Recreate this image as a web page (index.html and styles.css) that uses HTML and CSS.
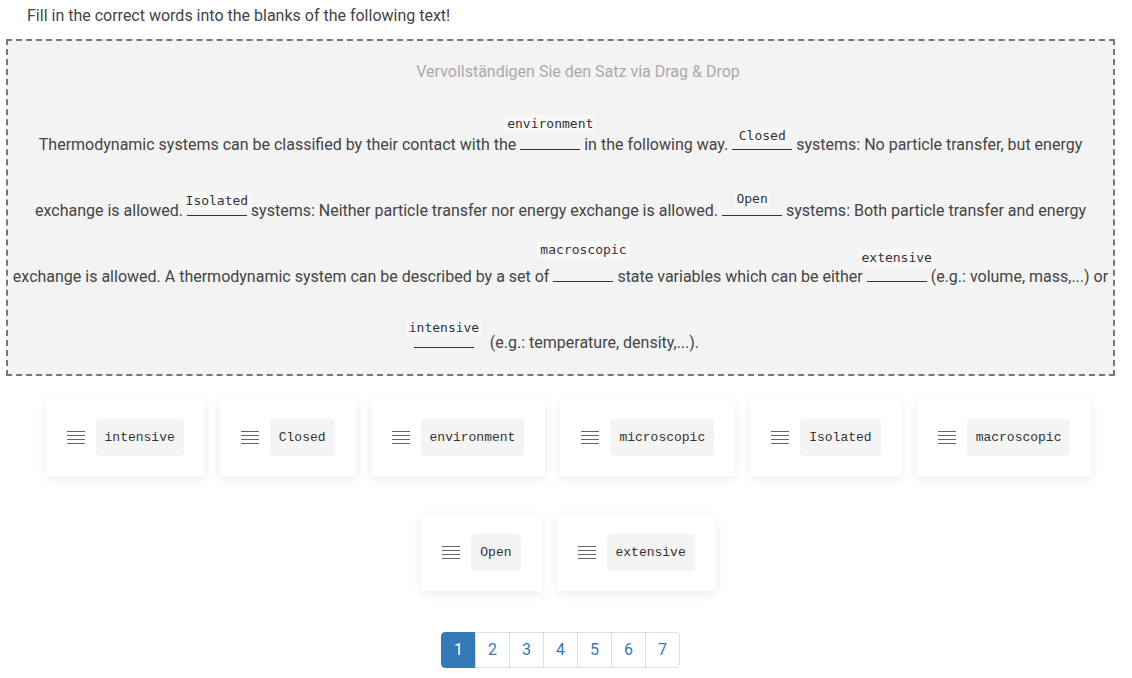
FILE: index.html
```html
<!DOCTYPE html>
<html lang="en">
<head>
<meta charset="utf-8">
<title>Cloze</title>
<link rel="stylesheet" href="styles.css">
</head>
<body>
<div class="page">
  <p class="prompt">Fill in the correct words into the blanks of the following text!</p>
  <div class="dropzone">
    <p class="hint">Vervollständigen Sie den Satz via Drag &amp; Drop</p>
    <p class="cloze">Thermodynamic systems can be classified by their contact with the <span class="blank"><span class="word w-env">environment</span></span> in the following way. <span class="blank"><span class="word w-closed">Closed</span></span> systems: No particle transfer, but energy exchange is allowed. <span class="blank"><span class="word w-isolated">Isolated</span></span> systems: Neither particle transfer nor energy exchange is allowed. <span class="blank"><span class="word w-open">Open</span></span> systems: Both particle transfer and energy exchange is allowed. A thermodynamic system can be described by a set of <span class="blank"><span class="word w-macro">macroscopic</span></span> state variables which can be either <span class="blank"><span class="word w-ext">extensive</span></span> (e.g.: volume, mass,...) or <span class="blank"><span class="word w-int">intensive</span></span> &nbsp;&nbsp;&nbsp;(e.g.: temperature, density,...).&nbsp;&nbsp;</p>
  </div>

  <div class="bank">
    <div class="card"><svg class="handle" width="18" height="13" viewBox="0 0 18 13"><path d="M0 .5H18M0 4.5H18M0 8.5H18M0 12.5H18" stroke="#666" stroke-width="1"/></svg><span class="chip">intensive</span></div>
    <div class="card"><svg class="handle" width="18" height="13" viewBox="0 0 18 13"><path d="M0 .5H18M0 4.5H18M0 8.5H18M0 12.5H18" stroke="#666" stroke-width="1"/></svg><span class="chip">Closed</span></div>
    <div class="card"><svg class="handle" width="18" height="13" viewBox="0 0 18 13"><path d="M0 .5H18M0 4.5H18M0 8.5H18M0 12.5H18" stroke="#666" stroke-width="1"/></svg><span class="chip">environment</span></div>
    <div class="card"><svg class="handle" width="18" height="13" viewBox="0 0 18 13"><path d="M0 .5H18M0 4.5H18M0 8.5H18M0 12.5H18" stroke="#666" stroke-width="1"/></svg><span class="chip">microscopic</span></div>
    <div class="card"><svg class="handle" width="18" height="13" viewBox="0 0 18 13"><path d="M0 .5H18M0 4.5H18M0 8.5H18M0 12.5H18" stroke="#666" stroke-width="1"/></svg><span class="chip">Isolated</span></div>
    <div class="card"><svg class="handle" width="18" height="13" viewBox="0 0 18 13"><path d="M0 .5H18M0 4.5H18M0 8.5H18M0 12.5H18" stroke="#666" stroke-width="1"/></svg><span class="chip">macroscopic</span></div>
    <div class="card"><svg class="handle" width="18" height="13" viewBox="0 0 18 13"><path d="M0 .5H18M0 4.5H18M0 8.5H18M0 12.5H18" stroke="#666" stroke-width="1"/></svg><span class="chip">Open</span></div>
    <div class="card"><svg class="handle" width="18" height="13" viewBox="0 0 18 13"><path d="M0 .5H18M0 4.5H18M0 8.5H18M0 12.5H18" stroke="#666" stroke-width="1"/></svg><span class="chip">extensive</span></div>
  </div>

  <nav class="pager">
    <a class="pg active">1</a><a class="pg">2</a><a class="pg">3</a><a class="pg">4</a><a class="pg">5</a><a class="pg">6</a><a class="pg">7</a>
  </nav>
</div>
</body>
</html>
```

FILE: styles.css
```css
html, body {
  margin: 0;
  padding: 0;
  background: #fff;
}
body {
  font-family: Roboto, "Liberation Sans", Arial, sans-serif;
  font-size: 16px;
  color: #444;
}
.page {
  padding: 0 17px 0 6px;
}
.prompt {
  margin: 5px 0 12px 21px;
  line-height: 22px;
}
.dropzone {
  border: 2px dashed #777;
  background: #f3f3f3;
  padding: 19px 0 0;
  text-align: center;
}
.hint {
  margin: 0 0 28px;
  padding-left: 35px;
  line-height: 24px;
  color: #aaa;
}
.cloze {
  margin: 0 0 -2px;
  line-height: 66px;
  color: #444;
}
.blank {
  position: relative;
  display: inline-block;
  width: 60px;
  height: 14px;
  border-bottom: 1px solid #333;
  vertical-align: baseline;
}
.word {
  position: absolute;
  left: 50%;
  transform: translateX(-50%);
  padding: 0 3px;
  background: #f7f7f7;
  font-family: "DejaVu Sans Mono", monospace;
  font-size: 13px;
  line-height: 18px;
  white-space: nowrap;
  color: #333;
}
.w-env { bottom: 16px; }
.w-closed { bottom: 4px; }
.w-isolated { bottom: 5px; }
.w-open { bottom: 7px; }
.w-macro { bottom: 22px; }
.w-ext { bottom: 14px; }
.w-int { bottom: 10px; }

.bank {
  display: flex;
  flex-wrap: wrap;
  justify-content: center;
  column-gap: 15px;
  row-gap: 38px;
  margin: 23px -16px 0 0;
}
.card {
  display: flex;
  align-items: center;
  gap: 11px;
  padding: 20px 21px;
  background: #fff;
  box-shadow: 0 3px 10px rgba(0, 0, 0, 0.08);
}
.handle {
  display: block;
  flex: none;
}
.chip {
  display: block;
  padding: 10px 9px;
  background: #f4f4f4;
  border-radius: 4px;
  font-family: "Liberation Mono", monospace;
  font-size: 13px;
  line-height: 17px;
  color: #333;
}
.pager {
  display: flex;
  justify-content: center;
  margin-top: 41px;
}
.pg {
  display: block;
  padding: 6px 12px;
  line-height: 22px;
  border: 1px solid #ddd;
  margin-left: -1px;
  color: #337ab7;
  background: #fff;
}
.pg:first-child {
  margin-left: 0;
  border-radius: 4px 0 0 4px;
}
.pg:last-child {
  border-radius: 0 4px 4px 0;
}
.pg.active {
  background: #337ab7;
  border-color: #337ab7;
  color: #fff;
}
```
